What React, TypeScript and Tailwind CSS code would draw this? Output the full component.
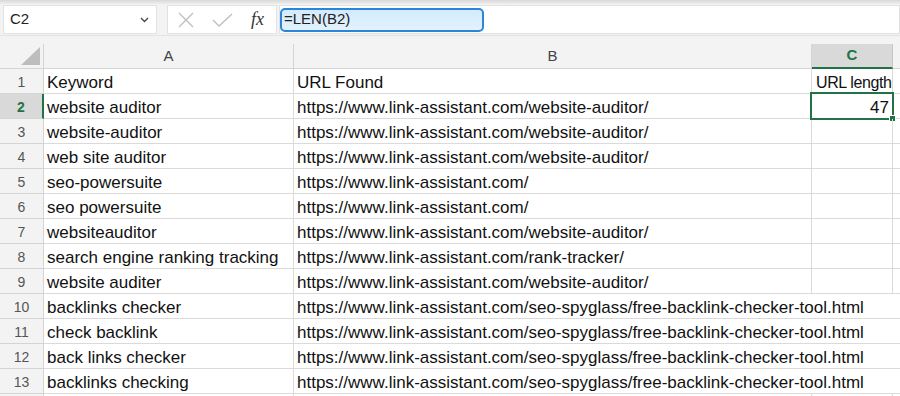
import React from "react";

const rows: [string, string][] = [
  ["Keyword", "URL Found"],
  ["website auditor", "https://www.link-assistant.com/website-auditor/"],
  ["website-auditor", "https://www.link-assistant.com/website-auditor/"],
  ["web site auditor", "https://www.link-assistant.com/website-auditor/"],
  ["seo-powersuite", "https://www.link-assistant.com/"],
  ["seo powersuite", "https://www.link-assistant.com/"],
  ["websiteauditor", "https://www.link-assistant.com/website-auditor/"],
  ["search engine ranking tracking", "https://www.link-assistant.com/rank-tracker/"],
  ["website auditer", "https://www.link-assistant.com/website-auditor/"],
  ["backlinks checker", "https://www.link-assistant.com/seo-spyglass/free-backlink-checker-tool.html"],
  ["check backlink", "https://www.link-assistant.com/seo-spyglass/free-backlink-checker-tool.html"],
  ["back links checker", "https://www.link-assistant.com/seo-spyglass/free-backlink-checker-tool.html"],
  ["backlinks checking", "https://www.link-assistant.com/seo-spyglass/free-backlink-checker-tool.html"],
  ["", ""],
];

const font = { fontFamily: '"Liberation Sans", Arial, sans-serif' };

export default function App() {
  return (
    <div className="w-[900px] h-[396px] overflow-hidden bg-white text-[#111]" style={font}>
      {/* top toolbar */}
      <div className="h-[44px] bg-[#f3f3f3] flex flex-col">
        <div className="h-[4px] bg-gradient-to-b from-[#d9d9d9] to-[#ededed]" />
        <div className="flex items-start pt-[1px] h-[32px] border-b border-[#e3e3e3]">
          <div className="ml-[3px] w-[154px] h-[29px] bg-white border border-[#e2e2e2] flex items-center justify-between pl-[6px] pr-[7px]">
            <span className="text-[15px] text-[#222]">C2</span>
            <svg width="9" height="6" viewBox="0 0 9 6">
              <path d="M1 1 L4.5 4.5 L8 1" fill="none" stroke="#444" strokeWidth="1.3" />
            </svg>
          </div>
          <div className="ml-[10px] w-[110px] h-[29px] bg-white border border-[#e2e2e2] flex items-center">
            <svg className="ml-[10px]" width="16" height="16" viewBox="0 0 16 16">
              <path d="M1 1 L15 15 M15 1 L1 15" stroke="#bdbdbd" strokeWidth="1.3" fill="none" />
            </svg>
            <svg className="ml-[18px]" width="21" height="14" viewBox="0 0 21 14">
              <path d="M1 7 L7 13 L20 1" stroke="#bdbdbd" strokeWidth="1.3" fill="none" />
            </svg>
            <span
              className="ml-[18px] text-[18px] italic text-[#333]"
              style={{ fontFamily: '"Liberation Serif", "Times New Roman", serif' }}
            >
              fx
            </span>
          </div>
          <div className="ml-[2px] flex-1 h-[29px] bg-white border border-[#e2e2e2] flex items-center">
            <div className="w-[204px] h-[24px] rounded-[5px] border-2 border-[#2b86d9] bg-gradient-to-b from-[#d3ebfd] to-[#e3f2fd] flex items-center pl-[2px] text-[15px] text-[#222]">
              =LEN(B2)
            </div>
          </div>
        </div>
      </div>

      {/* grid */}
      <div className="grid grid-cols-[44px_250px_518px_81px_1fr] auto-rows-[25px]">
        {/* header row */}
        <div className="bg-[#f3f3f3] border-r border-b border-[#d4d4d4] flex items-end justify-end pr-[3px] pb-[3px]">
          <svg width="19" height="18" viewBox="0 0 19 18">
            <polygon points="19,0 19,18 0,18" fill="#bdbdbd" />
          </svg>
        </div>
        <div className="bg-[#f3f3f3] border-r border-b border-[#d4d4d4] flex items-center justify-center text-[15px] text-[#444]">A</div>
        <div className="bg-[#f3f3f3] border-r border-b border-[#d4d4d4] flex items-center justify-center text-[15px] text-[#444]">B</div>
        <div className="bg-[#d9d9d9] border-r border-[#c6c6c6] border-b-2 border-b-[#217346] flex items-center justify-center text-[15px] font-bold text-[#217346]">C</div>
        <div className="bg-[#f3f3f3] border-b border-[#d4d4d4]" />

        {rows.map((r, i) => {
          const n = i + 1;
          const sel = n === 2;
          const long = r[1].length > 60;
          const last = n === rows.length;
          return (
            <React.Fragment key={n}>
              <div
                className={
                  sel
                    ? "bg-[#d9d9d9] border-b border-[#d4d4d4] border-r-2 border-r-[#217346] flex items-center justify-center pt-[3px] text-[14px] font-bold text-[#217346]"
                    : "bg-[#f3f3f3] border-r border-b border-[#d4d4d4] flex items-center justify-center pt-[3px] text-[14px] text-[#555]"
                }
              >
                {last ? "" : n}
              </div>
              <div className="border-r border-b border-[#dadada] flex items-center pt-[3px] pl-[3px] text-[17px] whitespace-nowrap overflow-hidden">
                {r[0]}
              </div>
              {long ? (
                <div className="col-span-3 border-b border-[#dadada] flex items-center pt-[3px] pl-[3px] text-[17px] whitespace-nowrap overflow-hidden">
                  {r[1]}
                </div>
              ) : (
                <>
                  <div className="border-r border-b border-[#dadada] flex items-center pt-[3px] pl-[3px] text-[17px] whitespace-nowrap overflow-hidden">
                    {r[1]}
                  </div>
                  <div className="relative border-r border-b border-[#dadada] flex items-center pt-[3px] text-[17px] whitespace-nowrap">
                    {n === 1 && <span className="pl-[4px] text-[16px] tracking-[-0.4px]">URL length</span>}
                    {n === 2 && (
                      <>
                        <span className="ml-auto pr-[3px]">47</span>
                        <div className="absolute -left-[2px] -top-[2px] -right-[2px] -bottom-[2px] border-2 border-[#217346]" />
                        <div className="absolute -right-[4px] -bottom-[4px] w-[7px] h-[7px] bg-[#217346] border border-white" />
                      </>
                    )}
                  </div>
                  <div className="border-b border-[#dadada]" />
                </>
              )}
            </React.Fragment>
          );
        })}
      </div>
    </div>
  );
}
